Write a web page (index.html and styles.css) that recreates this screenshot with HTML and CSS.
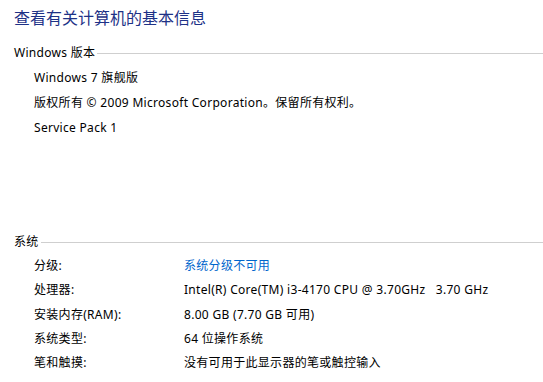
FILE: index.html
```html
<!DOCTYPE html>
<html lang="zh-CN">
<head>
    <meta charset="UTF-8">
    <title>系统</title>
    <link rel="stylesheet" href="styles.css">
</head>
<body>
    <h1 class="page-title">查看有关计算机的基本信息</h1>

    <section class="group">
        <div class="group-head"><span>Windows 版本</span></div>
        <div class="line">Windows 7 旗舰版</div>
        <div class="line">版权所有 © 2009 Microsoft Corporation。保留所有权利。</div>
        <div class="line">Service Pack 1</div>
    </section>

    <section class="group group-system">
        <div class="group-head"><span>系统</span></div>
        <div class="row">
            <div class="label">分级:</div>
            <div class="value link">系统分级不可用</div>
        </div>
        <div class="row">
            <div class="label">处理器:</div>
            <div class="value">Intel(R) Core(TM) i3-4170 CPU @ 3.70GHz&nbsp;&nbsp; 3.70 GHz</div>
        </div>
        <div class="row">
            <div class="label">安装内存(RAM):</div>
            <div class="value">8.00 GB (7.70 GB 可用)</div>
        </div>
        <div class="row">
            <div class="label">系统类型:</div>
            <div class="value">64 位操作系统</div>
        </div>
        <div class="row">
            <div class="label">笔和触摸:</div>
            <div class="value">没有可用于此显示器的笔或触控输入</div>
        </div>
    </section>
</body>
</html>
```

FILE: styles.css
```css
* {
    margin: 0;
    padding: 0;
    box-sizing: border-box;
}

body {
    font-family: 'Noto Sans', 'Noto Sans CJK SC', sans-serif;
    font-size: 12px;
    letter-spacing: 0.3px;
    color: #000;
    background: #fff;
    width: 543px;
    height: 382px;
    overflow: hidden;
    padding: 7px 0 0 14px;
}

.page-title {
    font-size: 16px;
    font-weight: normal;
    letter-spacing: 0;
    color: #1e3287;
    line-height: 22px;
    margin-bottom: 13px;
}

.group-head {
    display: flex;
    align-items: center;
    height: 20px;
}

.group-head::after {
    content: '';
    flex: 1;
    border-top: 1px solid #cfcfcf;
    margin-left: 2px;
    margin-top: 2px;
}

.group .line {
    padding-left: 20px;
    height: 25px;
    line-height: 25px;
}

.group-head + .line {
    margin-top: 3px;
}

.group-system {
    margin-top: 91px;
}

.row {
    display: flex;
    padding-left: 20px;
    height: 24.3px;
    line-height: 24px;
}

.group-head + .row {
    margin-top: 3px;
}

.label {
    width: 150px;
}

.link {
    color: #0066cc;
}
```
